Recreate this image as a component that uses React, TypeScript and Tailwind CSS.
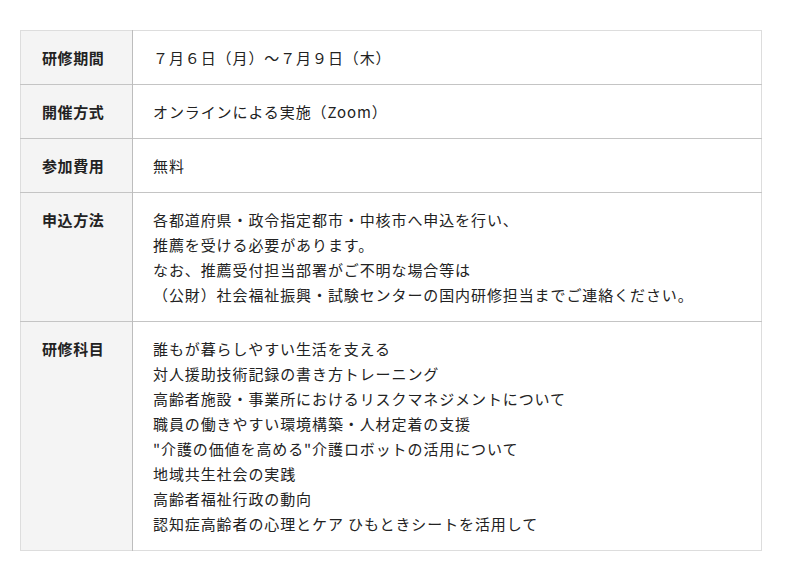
import React from "react";

const rows: { label: string; lines: string[] }[] = [
  { label: "研修期間", lines: ["７月６日（月）～７月９日（木）"] },
  { label: "開催方式", lines: ["オンラインによる実施（Zoom）"] },
  { label: "参加費用", lines: ["無料"] },
  {
    label: "申込方法",
    lines: [
      "各都道府県・政令指定都市・中核市へ申込を行い、",
      "推薦を受ける必要があります。",
      "なお、推薦受付担当部署がご不明な場合等は",
      "（公財）社会福祉振興・試験センターの国内研修担当までご連絡ください。",
    ],
  },
  {
    label: "研修科目",
    lines: [
      "誰もが暮らしやすい生活を支える",
      "対人援助技術記録の書き方トレーニング",
      "高齢者施設・事業所におけるリスクマネジメントについて",
      "職員の働きやすい環境構築・人材定着の支援",
      "\"介護の価値を高める\"介護ロボットの活用について",
      "地域共生社会の実践",
      "高齢者福祉行政の動向",
      "認知症高齢者の心理とケア ひもときシートを活用して",
    ],
  },
];

export default function App() {
  return (
    <div
      className="w-[800px] h-[581px] bg-white pt-[30px] pl-[20px]"
      style={{ fontFamily: '"Noto Sans CJK JP", "Noto Sans", sans-serif' }}
    >
      <table className="w-[742px] border-collapse border border-[#dddddd] text-[15px] leading-[25px] tracking-[0.9px] text-[#222222]">
        <tbody>
          {rows.map((r, i) => (
            <tr key={i} className={i < rows.length - 1 ? "border-b border-[#c4c4c4]" : ""}>
              <th className="w-[112px] bg-[#f4f4f4] border-r border-[#bdbdbd] align-top text-left font-bold tracking-[0.6px] pl-[21px] py-[14px]">
                {r.label}
              </th>
              <td className="align-top pl-[20px] py-[14px]">
                {r.lines.map((l, j) => (
                  <div key={j}>{l}</div>
                ))}
              </td>
            </tr>
          ))}
        </tbody>
      </table>
    </div>
  );
}
